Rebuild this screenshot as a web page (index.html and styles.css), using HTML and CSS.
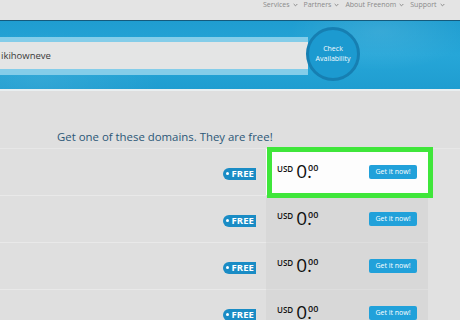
FILE: index.html
```html
<!DOCTYPE html>
<html lang="en">
<head>
<meta charset="utf-8">
<title>Freenom - Get a free domain</title>
<link rel="stylesheet" href="styles.css">
</head>
<body>
<nav class="topnav">
  <span class="nav-item">Services <svg class="chev" viewBox="0 0 6 4"><path d="M0.8 0.8 L3 3 L5.2 0.8" /></svg></span>
  <span class="nav-item">Partners <svg class="chev" viewBox="0 0 6 4"><path d="M0.8 0.8 L3 3 L5.2 0.8" /></svg></span>
  <span class="nav-item">About Freenom <svg class="chev" viewBox="0 0 6 4"><path d="M0.8 0.8 L3 3 L5.2 0.8" /></svg></span>
  <span class="nav-item">Support <svg class="chev" viewBox="0 0 6 4"><path d="M0.8 0.8 L3 3 L5.2 0.8" /></svg></span>
  <span class="nav-item">Sign In</span>
</nav>
<header class="hero">
  <div class="search">
    <div class="search-field">ikihowneve</div>
  </div>
  <div class="check">Check<br>Availability</div>
</header>
<div class="hero-edge"></div>
<main class="content">
  <h2 class="title">Get one of these domains. They are free!</h2>
  <div class="rows">
    <div class="row">
      <div class="row-left"><span class="tag">FREE</span></div>
      <div class="row-price highlight">
        <span class="price"><span class="cur">USD</span><span class="int">0.</span><span class="dec">00</span></span>
        <span class="btn">Get it now!</span>
      </div>
      <div class="row-rest"></div>
    </div>
    <div class="row">
      <div class="row-left"><span class="tag">FREE</span></div>
      <div class="row-price">
        <span class="price"><span class="cur">USD</span><span class="int">0.</span><span class="dec">00</span></span>
        <span class="btn">Get it now!</span>
      </div>
      <div class="row-rest"></div>
    </div>
    <div class="row">
      <div class="row-left"><span class="tag">FREE</span></div>
      <div class="row-price">
        <span class="price"><span class="cur">USD</span><span class="int">0.</span><span class="dec">00</span></span>
        <span class="btn">Get it now!</span>
      </div>
      <div class="row-rest"></div>
    </div>
    <div class="row">
      <div class="row-left"><span class="tag">FREE</span></div>
      <div class="row-price">
        <span class="price"><span class="cur">USD</span><span class="int">0.</span><span class="dec">00</span></span>
        <span class="btn">Get it now!</span>
      </div>
      <div class="row-rest"></div>
    </div>
  </div>
</main>
</body>
</html>
```
FILE: styles.css
```css
html, body {
  margin: 0;
  padding: 0;
}
body {
  width: 460px;
  height: 320px;
  overflow: hidden;
  background: #dfdfdf;
  font-family: "Open Sans", "Liberation Sans", sans-serif;
  color: #333;
}

/* top navigation */
.topnav {
  height: 20px;
  box-sizing: border-box;
  background: #e4e4e4;
  display: flex;
  align-items: flex-start;
  padding: 1px 0 0 263px;
  gap: 6px;
  white-space: nowrap;
  overflow: hidden;
  font-size: 7px;
  line-height: 8px;
  color: #8a8a8a;
}
.nav-item {
  display: inline-flex;
  align-items: center;
  gap: 3px;
}
.nav-item:last-child {
  margin-left: 12px;
}
.chev {
  width: 5px;
  height: 4px;
  fill: none;
  stroke: #8a8a8a;
  stroke-width: 1.2;
}

/* blue hero band */
.hero {
  height: 68px;
  border-top: 1px solid #155a7c;
  background:
    radial-gradient(ellipse 90px 40px at 380px 10px, rgba(255,255,255,0.10), transparent),
    radial-gradient(ellipse 120px 50px at 40px 60px, rgba(255,255,255,0.08), transparent),
    linear-gradient(180deg, #1f9dd0 0%, #26a6d8 50%, #1f9dd0 100%);
  display: flex;
  align-items: center;
}
.search {
  width: 308px;
  height: 38px;
  box-sizing: border-box;
  padding: 5px 0 6px;
  background: #84cde9;
  margin-top: 2px;
}
.search-field {
  height: 27px;
  background: #e4e5e5;
  font-size: 9.5px;
  line-height: 27px;
  padding-left: 1px;
  color: #3a3a3a;
}
.check {
  align-self: flex-start;
  margin: 6px 0 0 -2px;
  width: 54px;
  height: 54px;
  box-sizing: border-box;
  border-radius: 50%;
  border: 3px solid #167fb2;
  background: #1c9ad0;
  color: #f4fbff;
  font-size: 7px;
  line-height: 10.5px;
  text-align: center;
  display: flex;
  align-items: center;
  justify-content: center;
}
.hero-edge {
  height: 2px;
  background: #e9eff1;
}

/* content */
.content {
  padding-top: 39px;
}
.title {
  margin: 0 0 4px;
  padding-left: 57px;
  font-size: 11.4px;
  line-height: 14px;
  font-weight: 400;
  color: #2b5777;
}
.rows {
  border-top: 1px solid #e7e7e7;
}
.row {
  display: grid;
  grid-template-columns: 266px 162px 1fr;
  height: 47px;
  box-sizing: border-box;
}
.row-left {
  border-bottom: 1px solid #e9e9e9;
  display: flex;
  align-items: center;
  justify-content: flex-end;
  padding-right: 10px;
}
.row-rest {
  background: #e1e1e1;
}
.tag {
  position: relative;
  margin-top: 3px;
  height: 12px;
  box-sizing: border-box;
  padding: 0 2px 0 8px;
  background: #1a8cc5;
  border-radius: 6px 0 0 6px;
  color: #fff;
  font-size: 9.5px;
  font-weight: 700;
  line-height: 12px;
  letter-spacing: 0.1px;
}
.tag::before {
  content: "";
  position: absolute;
  left: 3px;
  top: 4.5px;
  width: 3px;
  height: 3px;
  border-radius: 50%;
  background: #fff;
}
.row-price {
  background: #d8d8d8;
  border-bottom: 1px solid #dedede;
  display: flex;
  align-items: center;
  padding: 0 11px;
}
.row-price.highlight {
  position: relative;
  background: #fdfdfd;
}
.row-price.highlight::after {
  content: "";
  position: absolute;
  top: -2px;
  left: 1px;
  right: -5px;
  bottom: -3px;
  border: 5px solid #3fe63a;
}
.price {
  display: flex;
  align-items: flex-start;
  color: #111;
  margin-top: -2px;
}
.cur {
  font-size: 8px;
  font-weight: 600;
  line-height: 8px;
  margin: 3px 3px 0 0;
}
.int {
  font-size: 19px;
  line-height: 19px;
  font-weight: 400;
}
.dec {
  font-size: 9px;
  line-height: 9px;
  margin: 1px 0 0 -4px;
  font-weight: 600;
}
.btn {
  margin-left: auto;
  width: 48px;
  height: 14px;
  box-sizing: border-box;
  background: #21a1da;
  border-radius: 2px;
  color: #fff;
  font-size: 7px;
  line-height: 14px;
  text-align: center;
}
```
